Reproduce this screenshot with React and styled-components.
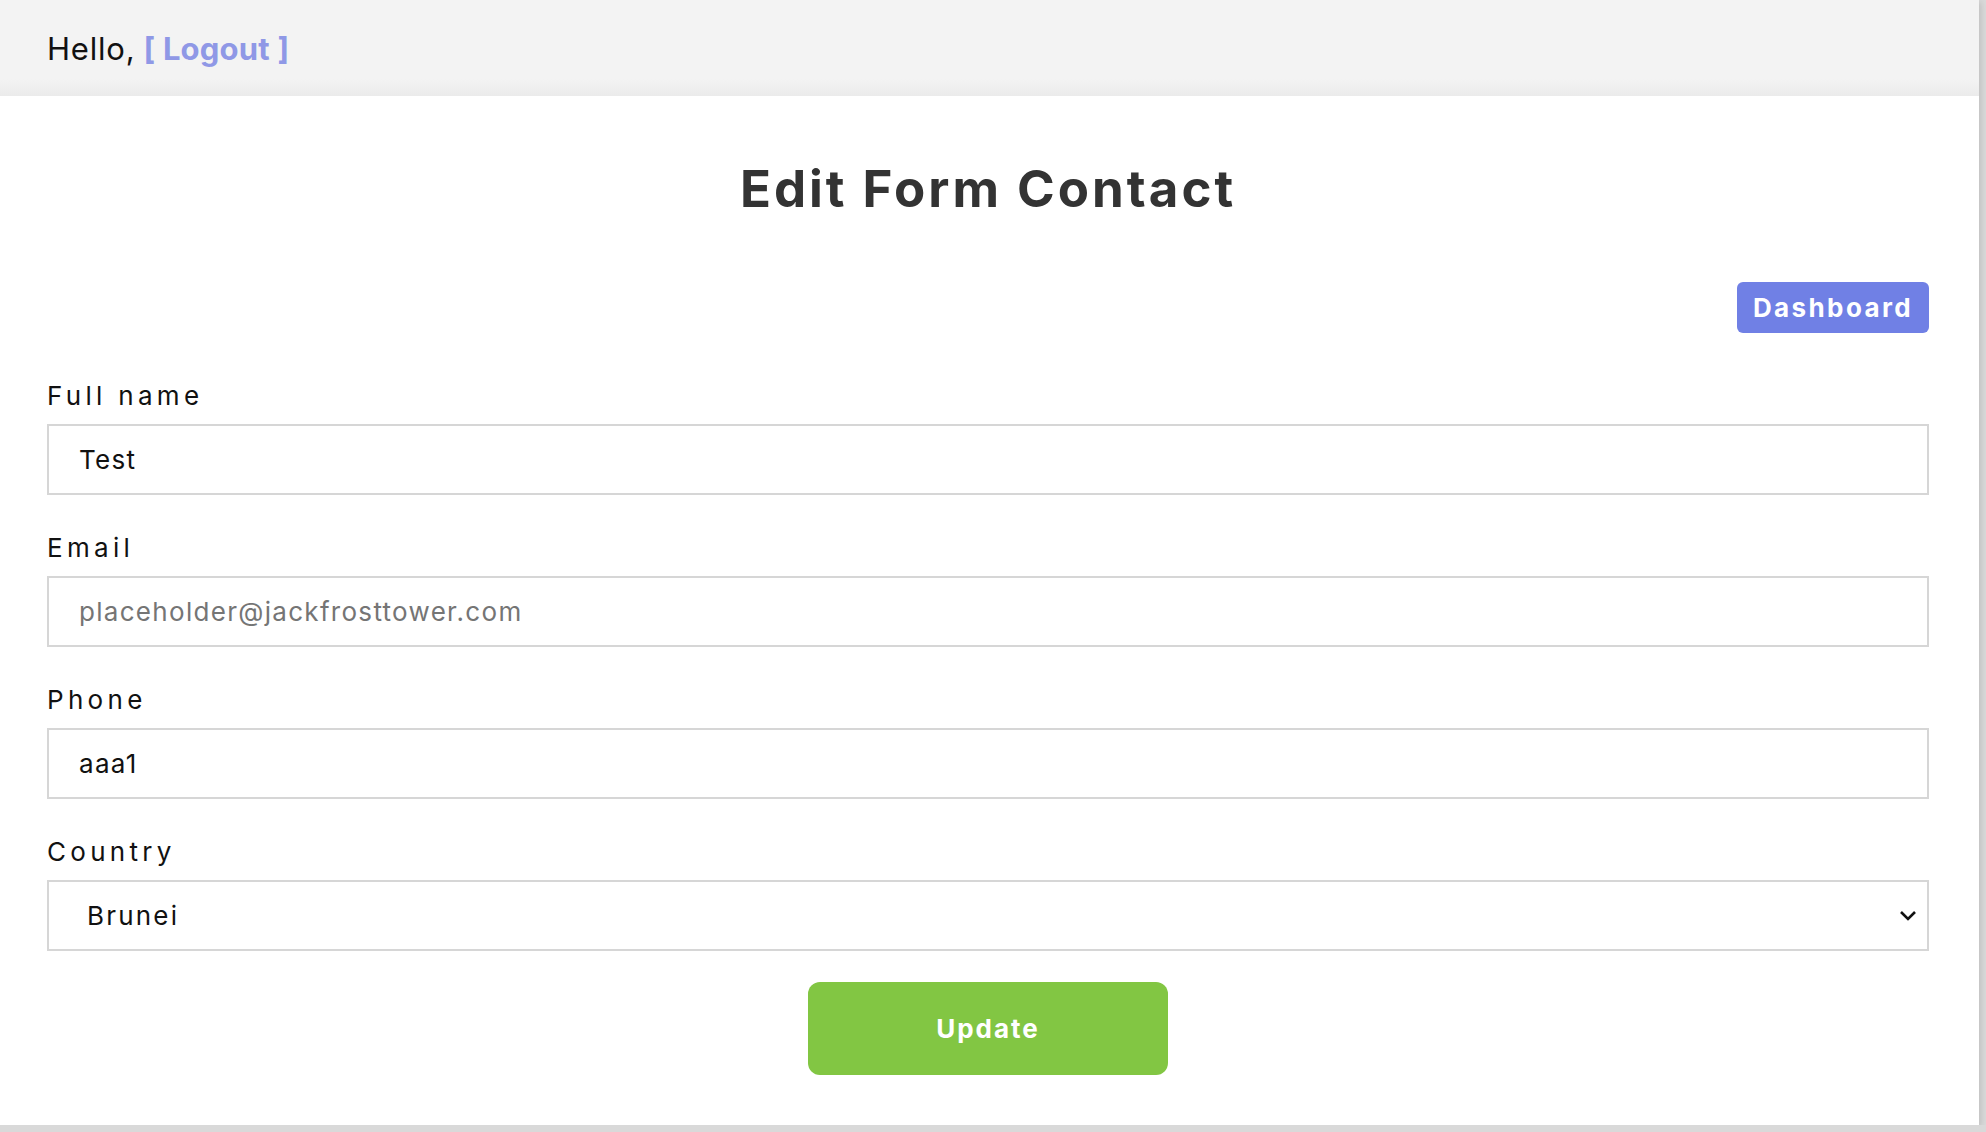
import React, { useState } from "react";
import styled, { createGlobalStyle } from "styled-components";

const GlobalStyle = createGlobalStyle`
    body {
        margin: 0;
        background: #d9d9d9;
        font-family: Inter, "Noto Sans", sans-serif;
    }
`

const Page = styled.div`
    width: 1979px;
    height: 1125px;
    background: #fff;
    box-shadow: 2px 2px 6px rgba(0, 0, 0, 0.12);
    display: flex;
    flex-direction: column;
`
const Header = styled.header`
    height: 96px;
    padding-left: 47px;
    display: flex;
    align-items: center;
    background: linear-gradient(#f3f3f3 82%, #ebebeb);
    font-size: 31px;
    letter-spacing: 0.8px;
    color: #111;
`
const LogoutLink = styled.a`
    color: #8f98e6;
    font-weight: 700;
    letter-spacing: 0.2px;
    text-decoration: none;
    margin-left: 8px;
    cursor: pointer;
`
const Main = styled.main`
    padding: 0 50px 0 47px;
    display: flex;
    flex-direction: column;
`
const Title = styled.h1`
    margin: 62px 0 0;
    text-align: center;
    font-size: 51px;
    line-height: 1.2;
    letter-spacing: 3px;
    font-weight: 700;
    color: #333;
`
const Toolbar = styled.div`
    display: flex;
    justify-content: flex-end;
    margin-top: 63px;
`
const DashboardButton = styled.a`
    display: flex;
    align-items: center;
    justify-content: center;
    width: 192px;
    height: 51px;
    border-radius: 6px;
    background: #7080e5;
    color: #fff;
    font-size: 26px;
    font-weight: 700;
    letter-spacing: 2.4px;
    text-decoration: none;
    cursor: pointer;
`
const Form = styled.form`
    display: flex;
    flex-direction: column;
    margin-top: 47px;
`
const Field = styled.div`
    display: flex;
    flex-direction: column;
    margin-bottom: ${(props) => (props.$last ? "31px" : "36.8px")};
`
const Label = styled.label`
    font-size: 26px;
    line-height: 1.2;
    letter-spacing: 4.3px;
    color: #111;
    margin-bottom: 13px;
`
const TextInput = styled.input`
    box-sizing: border-box;
    height: 71px;
    width: 100%;
    border: 2px solid #d6d6d6;
    padding: 0 30px;
    font-family: inherit;
    font-size: 26px;
    letter-spacing: 1.3px;
    color: #111;
    outline: none;
    &::placeholder {
        color: #757575;
    }
`
const SelectWrap = styled.div`
    position: relative;
`
const Select = styled.select`
    box-sizing: border-box;
    height: 71px;
    width: 100%;
    border: 2px solid #d6d6d6;
    border-radius: 0;
    padding: 0 38px;
    background: #fff;
    appearance: none;
    font-family: inherit;
    font-size: 26px;
    letter-spacing: 2.2px;
    color: #111;
    outline: none;
`
const Chevron = styled.svg`
    position: absolute;
    right: 12px;
    top: 30px;
    pointer-events: none;
`
const SubmitRow = styled.div`
    display: flex;
    justify-content: center;
`
const UpdateButton = styled.button`
    width: 360px;
    height: 93px;
    border: none;
    border-radius: 12px;
    background: #82c643;
    color: #fff;
    font-family: inherit;
    font-size: 26px;
    font-weight: 700;
    letter-spacing: 2px;
    cursor: pointer;
`

const countries = ["Brunei", "Cambodia", "Indonesia", "Laos", "Malaysia", "Myanmar", "Philippines", "Singapore", "Thailand", "Vietnam"]

const App = () => {
    const [name, setName] = useState("Test")
    const [email, setEmail] = useState("")
    const [phone, setPhone] = useState("aaa1")
    const [country, setCountry] = useState("Brunei")

    return (
        <>
            <GlobalStyle />
            <Page>
                <Header>
                    Hello, <LogoutLink>[ Logout ]</LogoutLink>
                </Header>
                <Main>
                    <Title>Edit Form Contact</Title>
                    <Toolbar>
                        <DashboardButton>Dashboard</DashboardButton>
                    </Toolbar>
                    <Form onSubmit={(e) => e.preventDefault()}>
                        <Field>
                            <Label>Full name</Label>
                            <TextInput value={name} onChange={(e) => setName(e.target.value)} />
                        </Field>
                        <Field>
                            <Label>Email</Label>
                            <TextInput placeholder="placeholder@jackfrosttower.com" value={email} onChange={(e) => setEmail(e.target.value)} />
                        </Field>
                        <Field>
                            <Label>Phone</Label>
                            <TextInput value={phone} onChange={(e) => setPhone(e.target.value)} />
                        </Field>
                        <Field $last>
                            <Label>Country</Label>
                            <SelectWrap>
                                <Select value={country} onChange={(e) => setCountry(e.target.value)}>
                                    {countries.map((c) => (
                                        <option key={c} value={c}>{c}</option>
                                    ))}
                                </Select>
                                <Chevron width="18" height="12" viewBox="0 0 18 12">
                                    <path d="M2 2 L9 9 L16 2" fill="none" stroke="#111" strokeWidth="2.6" />
                                </Chevron>
                            </SelectWrap>
                        </Field>
                        <SubmitRow>
                            <UpdateButton type="submit">Update</UpdateButton>
                        </SubmitRow>
                    </Form>
                </Main>
            </Page>
        </>
    )
}

export default App;
